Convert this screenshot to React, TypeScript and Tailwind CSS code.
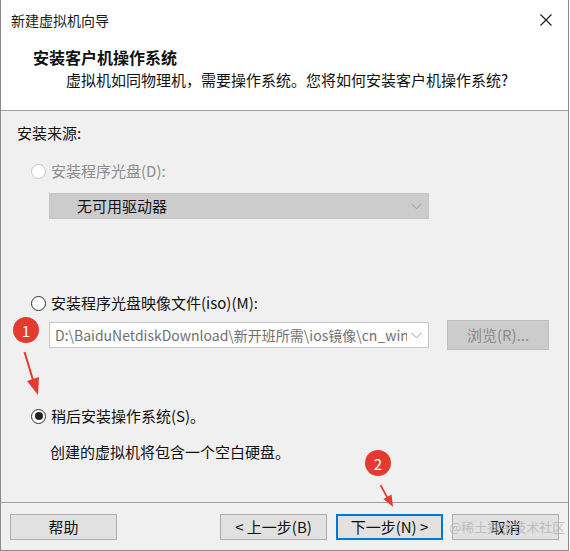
import { ReactNode } from "react";

const font = { fontFamily: '"Noto Sans CJK SC", "Noto Sans", sans-serif' };

function Radio({ checked, disabled, children }: { checked?: boolean; disabled?: boolean; children: ReactNode }) {
  return (
    <div className="flex h-[20px] items-center">
      <span
        className={[
          "ml-[30px] flex h-[15px] w-[15px] items-center justify-center rounded-full border bg-white",
          disabled ? "border-[#c6c6c6]" : "border-[#333333]",
        ].join(" ")}
      >
        {checked ? <span className="h-[8px] w-[8px] rounded-full bg-[#222222]" /> : null}
      </span>
      <span className={["ml-[5px] text-[15px] leading-[20px]", disabled ? "text-[#8c8c8c]" : "text-[#111111]"].join(" ")}>
        {children}
      </span>
    </div>
  );
}

function Chevron() {
  return (
    <svg width="11" height="7" viewBox="0 0 11 7" className="shrink-0">
      <polyline points="0.5,0.8 5.5,5.8 10.5,0.8" fill="none" stroke="#9a9a9a" strokeWidth="1" />
    </svg>
  );
}

function Badge({ n, className }: { n: string; className: string }) {
  return (
    <div
      className={[
        "absolute flex h-[26px] w-[26px] items-center justify-center rounded-full bg-[#e53a2f] text-[15px] leading-none text-white",
        className,
      ].join(" ")}
    >
      {n}
    </div>
  );
}

export default function App() {
  return (
    <div className="relative h-[551px] w-[570px] overflow-hidden bg-white" style={font}>
      <div className="flex h-[551px] w-[569px] flex-col border-x border-b border-[#8a8a8a] bg-[#f0f0f0] text-[#111111]">
        <div className="h-[111px] border-b border-[#a0a0a0] bg-white">
          <div className="flex h-[40px] items-center justify-between pl-[10px] pr-[16px]">
            <span className="text-[14px] leading-[20px] text-[#1a1a1a]">新建虚拟机向导</span>
            <svg width="12" height="12" viewBox="0 0 12 12">
              <path d="M0.5 0.5 L11.5 11.5 M11.5 0.5 L0.5 11.5" stroke="#1a1a1a" strokeWidth="1.1" />
            </svg>
          </div>
          <div className="mt-[7px] pl-[32px] text-[16px] font-bold leading-[20px]">安装客户机操作系统</div>
          <div className="mt-[3px] pl-[65px] text-[15px] leading-[20px]">
            虚拟机如同物理机，需要操作系统。您将如何安装客户机操作系统?
          </div>
        </div>

        <div className="flex h-[391px] flex-col">
          <div className="mt-[12px] pl-[16px] text-[15px] leading-[20px]">安装来源:</div>

          <div className="mt-[18px]">
            <Radio disabled>安装程序光盘(D):</Radio>
          </div>
          <div className="ml-[48px] mt-[12px] flex h-[26px] w-[380px] items-center justify-between border border-[#c4c4c4] bg-[#cccccc] pl-[27px] pr-[6px]">
            <span className="text-[15px] leading-[20px] text-[#111111]">无可用驱动器</span>
            <Chevron />
          </div>

          <div className="mt-[74px]">
            <Radio>安装程序光盘映像文件(iso)(M):</Radio>
          </div>
          <div className="mt-[7px] flex items-center">
            <div className="ml-[48px] flex h-[26px] w-[380px] items-center border border-[#c8c8c8] bg-white pl-[5px] pr-[6px]">
              <span className="w-[352px] overflow-hidden whitespace-nowrap text-[14px] leading-[20px] text-[#707070]">
                D:\BaiduNetdiskDownload\新开班所需\ios镜像\cn_wind
              </span>
              <span className="ml-auto">
                <Chevron />
              </span>
            </div>
            <div className="ml-[18px] flex h-[30px] w-[102px] items-center justify-center border border-[#bfbfbf] bg-[#cccccc] text-[15px] leading-[20px] text-[#8a8a8a]">
              浏览(R)...
            </div>
          </div>

          <div className="mt-[56px]">
            <Radio checked>稍后安装操作系统(S)。</Radio>
          </div>
          <div className="mt-[16px] pl-[49px] text-[15px] leading-[20px]">创建的虚拟机将包含一个空白硬盘。</div>
        </div>

        <div className="flex border-t border-[#a0a0a0] pl-[9px] pt-[11px]">
          <div className="flex h-[26px] w-[107px] items-center justify-center border border-[#adadad] bg-[#e1e1e1] text-[15px] leading-[20px]">
            帮助
          </div>
          <div className="ml-[103px] flex h-[26px] w-[107px] items-center justify-center border border-[#adadad] bg-[#e1e1e1] text-[15px] leading-[20px]">
            &lt; 上一步(B)
          </div>
          <div className="ml-[9px] flex h-[26px] w-[107px] items-center justify-center border-2 border-[#0078d7] bg-[#e1e1e1] text-[15px] leading-[20px]">
            下一步(N) &gt;
          </div>
          <div className="relative ml-[9px] flex h-[26px] w-[107px] items-center justify-center border border-[#adadad] bg-[#e1e1e1] text-[15px] leading-[20px]">
            取消
            <span className="pointer-events-none absolute left-[-4px] top-[3px] whitespace-nowrap text-[13px] leading-[18px] text-[#b4b4b4]/80">
              @稀土掘金技术社区
            </span>
          </div>
        </div>
      </div>

      <Badge n="1" className="left-[13px] top-[317px]" />
      <Badge n="2" className="left-[365px] top-[450px]" />
      <svg className="pointer-events-none absolute left-0 top-0" width="570" height="551">
        <line x1="24.5" y1="352" x2="33" y2="380" stroke="#e53a2f" strokeWidth="2" />
        <polygon points="38,395 39,377 27,381" fill="#e53a2f" />
        <line x1="380.5" y1="485" x2="387.5" y2="498" stroke="#e53a2f" strokeWidth="1.6" />
        <polygon points="393,507 391.5,494.5 383.5,499" fill="#e53a2f" />
      </svg>
    </div>
  );
}
